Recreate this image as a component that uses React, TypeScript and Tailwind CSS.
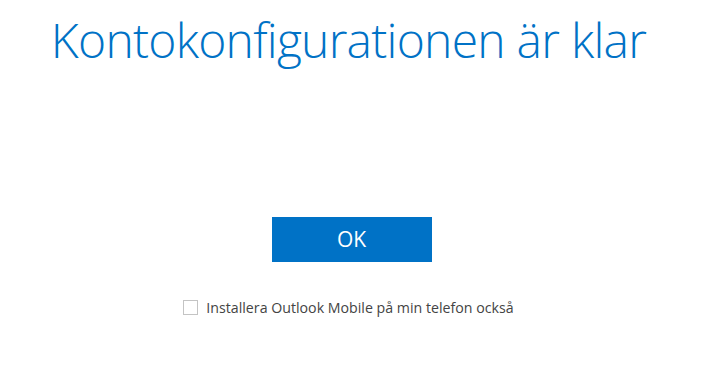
export default function App() {
  return (
    <div className="w-[703px] h-[370px] bg-white flex flex-col items-center" style={{ fontFamily: '"Open Sans", "Noto Sans", sans-serif' }}>
      <h1 className="mt-[8px] mr-[6px] text-[48px] leading-[64px] font-light text-[#0072c6] tracking-[-0.75px] whitespace-nowrap">
        Kontokonfigurationen är klar
      </h1>
      <button className="mt-[145px] w-[160px] h-[45px] bg-[#0072c6] text-white text-[21px] font-normal">
        OK
      </button>
      <label className="mt-[35px] mr-[6px] flex items-center gap-[8px] text-[14.2px] text-[#444444]">
        <span className="w-[15px] h-[15px] border border-[#c4c4c4] bg-white" />
        <span>Installera Outlook Mobile på min telefon också</span>
      </label>
    </div>
  );
}
